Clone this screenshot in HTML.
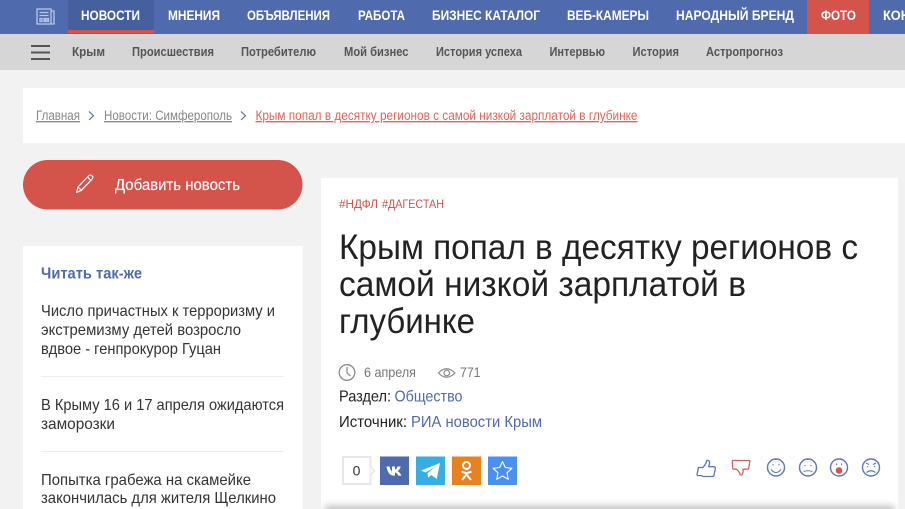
<!DOCTYPE html>
<html lang="ru"><head><meta charset="utf-8"><title>Крым попал в десятку регионов</title>
<style>
html,body{margin:0;padding:0;background:#f2f2f2;overflow:hidden}
svg{display:block;font-family:"Liberation Sans",sans-serif}
.n{font-size:14px;font-weight:700;fill:#fff}
.s{font-size:13px;font-weight:700;fill:#555}
.b{font-size:13.5px;text-decoration:underline}
.t{font-size:35px;fill:#222}
.r{font-size:16px;fill:#333}
.m{font-size:16px;fill:#222}
.l{fill:#4f6aad;font-size:16px}
</style></head><body>
<svg xmlns="http://www.w3.org/2000/svg" width="905" height="509" viewBox="0 0 905 509">
<defs>
<filter id="bl" x="-5%" y="-300%" width="110%" height="700%"><feGaussianBlur stdDeviation="3.5"/></filter>
<clipPath id="cp"><rect x="321" y="178" width="577" height="331"/></clipPath>
</defs>
<rect width="905" height="509" fill="#f2f2f2"/>
<!-- top nav -->
<rect width="905" height="34" fill="#4f6aad"/>
<rect x="68" width="86" height="34" fill="#465f9f"/>
<rect x="68" y="30" width="86" height="3.500" fill="#d4534a"/>
<rect x="807" width="62" height="34" fill="#d4534a"/>
<g fill="none" stroke="#b9c6e6" stroke-width="1.300">
<rect x="37" y="9" width="14" height="15"/>
<path d="M51 11h3v13h-3M39.500 12.500h9M39.500 15.500h9M40 18.500h2v3h-2zM44 18.500h1.500v3H44zM47 18.500h1.500v3H47z"/>
</g>
<text class="n" x="81" y="20" textLength="59" lengthAdjust="spacingAndGlyphs">НОВОСТИ</text>
<text class="n" x="168" y="20" textLength="52" lengthAdjust="spacingAndGlyphs">МНЕНИЯ</text>
<text class="n" x="247" y="20" textLength="83" lengthAdjust="spacingAndGlyphs">ОБЪЯВЛЕНИЯ</text>
<text class="n" x="358" y="20" textLength="47" lengthAdjust="spacingAndGlyphs">РАБОТА</text>
<text class="n" x="432" y="20" textLength="108" lengthAdjust="spacingAndGlyphs">БИЗНЕС КАТАЛОГ</text>
<text class="n" x="567" y="20" textLength="82" lengthAdjust="spacingAndGlyphs">ВЕБ-КАМЕРЫ</text>
<text class="n" x="676" y="20" textLength="118" lengthAdjust="spacingAndGlyphs">НАРОДНЫЙ БРЕНД</text>
<text class="n" x="821" y="20" textLength="35" lengthAdjust="spacingAndGlyphs">ФОТО</text>
<text class="n" x="883" y="20" textLength="27" lengthAdjust="spacingAndGlyphs">КОН</text>
<!-- sub nav -->
<rect y="34" width="905" height="36" fill="#d6d6d6"/>
<path d="M31 46h19M31 52.500h19M31 59h19" stroke="#555" stroke-width="2"/>
<text class="s" x="72" y="56" textLength="33" lengthAdjust="spacingAndGlyphs">Крым</text>
<text class="s" x="132" y="56" textLength="82" lengthAdjust="spacingAndGlyphs">Происшествия</text>
<text class="s" x="241" y="56" textLength="75" lengthAdjust="spacingAndGlyphs">Потребителю</text>
<text class="s" x="344" y="56" textLength="64.500" lengthAdjust="spacingAndGlyphs">Мой бизнес</text>
<text class="s" x="436" y="56" textLength="86" lengthAdjust="spacingAndGlyphs">История успеха</text>
<text class="s" x="549.500" y="56" textLength="55.500" lengthAdjust="spacingAndGlyphs">Интервью</text>
<text class="s" x="632.500" y="56" textLength="46.500" lengthAdjust="spacingAndGlyphs">История</text>
<text class="s" x="706" y="56" textLength="77" lengthAdjust="spacingAndGlyphs">Астропрогноз</text>
<!-- breadcrumb -->
<rect x="23" y="88" width="882" height="55" fill="#fff"/>
<text class="b" x="36" y="120" fill="#888" textLength="44" lengthAdjust="spacingAndGlyphs">Главная</text>
<path d="M89 111.500l4.500 4.200-4.500 4.200" fill="none" stroke="#5f78b5" stroke-width="1.200"/>
<text class="b" x="104" y="120" fill="#888" textLength="128" lengthAdjust="spacingAndGlyphs">Новости: Симферополь</text>
<path d="M241 111.500l4.500 4.200-4.500 4.200" fill="none" stroke="#5f78b5" stroke-width="1.200"/>
<text class="b" x="255.500" y="120" fill="#e0645b" textLength="382" lengthAdjust="spacingAndGlyphs">Крым попал в десятку регионов с самой низкой зарплатой в глубинке</text>
<!-- button -->
<rect x="23" y="160" width="279.500" height="49.500" rx="24.750" fill="#d4534a"/>
<g fill="none" stroke="#fff" stroke-width="1.200" stroke-linejoin="round">
<path d="M76.500 192.500l1.500-5.500 11-11.500q1.500-1 3 .3t.3 3l-11 11.500zM78 187l4 4M87.500 177l4 4"/>
</g>
<text x="115" y="190" font-size="15.500" fill="#fff" stroke="#fff" stroke-width=".15" textLength="125" lengthAdjust="spacingAndGlyphs">Добавить новость</text>
<!-- sidebar -->
<rect x="23" y="246" width="279.500" height="263" fill="#fff"/>
<text x="41" y="278.500" font-size="15.500" font-weight="700" fill="#4f6aad" textLength="101" lengthAdjust="spacingAndGlyphs">Читать так-же</text>
<text class="r" x="41" y="316" textLength="234" lengthAdjust="spacingAndGlyphs">Число причастных к терроризму и</text>
<text class="r" x="41" y="335" textLength="200" lengthAdjust="spacingAndGlyphs">экстремизму детей возросло</text>
<text class="r" x="41" y="354" textLength="180" lengthAdjust="spacingAndGlyphs">вдвое - генпрокурор Гуцан</text>
<rect x="41" y="376" width="243" height="1" fill="#eee"/>
<text class="r" x="41" y="410" textLength="243" lengthAdjust="spacingAndGlyphs">В Крыму 16 и 17 апреля ожидаются</text>
<text class="r" x="41" y="429" textLength="74" lengthAdjust="spacingAndGlyphs">заморозки</text>
<rect x="41" y="451" width="243" height="1" fill="#eee"/>
<text class="r" x="41" y="485" textLength="210" lengthAdjust="spacingAndGlyphs">Попытка грабежа на скамейке</text>
<text class="r" x="41" y="503" textLength="235" lengthAdjust="spacingAndGlyphs">закончилась для жителя Щелкино</text>
<!-- main card -->
<rect x="321" y="178" width="577" height="331" fill="#fff"/>
<text x="339" y="208" font-size="12" fill="#d4534a" textLength="39" lengthAdjust="spacingAndGlyphs">#НДФЛ</text>
<text x="382" y="208" font-size="12" fill="#d4534a" textLength="62" lengthAdjust="spacingAndGlyphs">#ДАГЕСТАН</text>
<text class="t" x="339" y="259" textLength="519" lengthAdjust="spacingAndGlyphs">Крым попал в десятку регионов с</text>
<text class="t" x="339" y="296" textLength="407" lengthAdjust="spacingAndGlyphs">самой низкой зарплатой в</text>
<text class="t" x="339" y="333" textLength="136" lengthAdjust="spacingAndGlyphs">глубинке</text>
<!-- meta -->
<circle cx="347" cy="372.500" r="7.800" fill="none" stroke="#8a8a8a" stroke-width="1.300"/>
<path d="M347 367v6l3.500 3" fill="none" stroke="#8a8a8a" stroke-width="1.200"/>
<text x="364" y="377" font-size="14" fill="#777" textLength="52" lengthAdjust="spacingAndGlyphs">6 апреля</text>
<path d="M438.500 373q8-8.500 16.500 0q-8.500 8.500-16.500 0z" fill="none" stroke="#8a8a8a" stroke-width="1.200"/>
<circle cx="446.800" cy="373" r="2.800" fill="none" stroke="#8a8a8a" stroke-width="1.200"/>
<text x="460" y="377" font-size="14" fill="#777" textLength="20.500" lengthAdjust="spacingAndGlyphs">771</text>
<text class="m" x="339" y="401.500" textLength="52" lengthAdjust="spacingAndGlyphs">Раздел:</text>
<text class="l" x="394.500" y="401.500" textLength="68" lengthAdjust="spacingAndGlyphs">Общество</text>
<text class="m" x="339" y="427" textLength="68" lengthAdjust="spacingAndGlyphs">Источник:</text>
<text class="l" x="411" y="427" textLength="131" lengthAdjust="spacingAndGlyphs">РИА новости Крым</text>
<!-- share -->
<rect x="343" y="457" width="27.500" height="27" fill="#fff" stroke="#e8e8e8" stroke-width="2"/>
<path d="M370.500 467l4 3.800-4 3.800" fill="#fff" stroke="#e8e8e8" stroke-width="1.500"/>
<text x="356.500" y="475.500" font-size="14" fill="#333" text-anchor="middle">0</text>
<rect x="380" y="456.500" width="29" height="28.500" fill="#4f6aad"/>
<path d="M386.500 466.500h3q.8 3.500 2.500 5v-5h3v3.300q1.800-1 2.700-3.300h3q-.7 3-3 4.600 2.500 1.500 3.700 4.500h-3.200q-1-2.500-3.200-3.200v3.200h-1.200q-5.800 0-7.300-9.100z" fill="#fff"/>
<rect x="416" y="456.500" width="29" height="28.500" fill="#37aee2"/>
<path d="M421 470.500l19-7.500-3.200 16-5.600-4-3 2.800-.8-4.500 7.800-6.500-9.800 5.700z" fill="#fff"/>
<rect x="452" y="456.500" width="29" height="28.500" fill="#e8811f"/>
<circle cx="466.500" cy="465.500" r="3.500" fill="none" stroke="#fff" stroke-width="2"/>
<path d="M461.500 471.500q5 3 10 0M466.500 473.500v1.500M466.500 474.500l-4.500 5.500M466.500 474.500l4.500 5.500" fill="none" stroke="#fff" stroke-width="2"/>
<rect x="488" y="456.500" width="29" height="28.500" fill="#4a90f0"/>
<path d="M502.500 461.500l2.800 6 6.600.8-4.900 4.500 1.300 6.500-5.800-3.300-5.800 3.300 1.300-6.500-4.900-4.500 6.600-.8z" fill="none" stroke="#fff" stroke-width="1.100" stroke-linejoin="round"/>
<!-- reactions -->
<path d="M698.500 467.500h4.200q3-2.500 4.200-7.200 2-.4 2.700 1.600.2 2.300-1 4.800h5.600q1.400.3 1.100 2l-1.300 6.400q-.3 1.400-1.600 1.400h-9.500l-1.400-.9h-3.500q-1-.1-1-1z" fill="none" stroke="#5b78bb" stroke-width="1.300" stroke-linejoin="round"/>
<path d="M733 460.500h16q1 0 .8 1.200l-1.100 6.500q-.3 1-1.500 1h-4.200q.6 3-1 5.500l-1.700.2q-1.100-3.700-4-5.700h-2.600q-.8 0-1-1l-.4-6.500q0-1.200.7-1.200z" fill="none" stroke="#dc6058" stroke-width="1.300" stroke-linejoin="round"/>
<g fill="none" stroke="#5b78bb" stroke-width="1.400">
<circle cx="776" cy="467.500" r="8.500"/>
<circle cx="808" cy="467.500" r="8.500"/>
<circle cx="839" cy="467.500" r="8.500"/>
<circle cx="871" cy="467.500" r="8.500"/>
<path d="M771 469.500q5 6 10 0M773 464v1.500M779 464v1.500" stroke-width="1.100"/>
<path d="M803.500 471.500q4.500-1.500 9 0M805 465v1.300M811 465v1.300" stroke-width="1.100"/>
<path d="M836.500 463.500v1.500M841.500 463.500v1.500" stroke-width="1.100"/>
<path d="M866 463l3 1.500M876 463l-3 1.500M866.500 472.500q4.500-3.500 9 0M867.500 466v1M874.500 466v1" stroke-width="1.100"/>
</g>
<circle cx="839" cy="470.500" r="3.300" fill="#d4534a"/>
<!-- bottom shadow band -->
<g clip-path="url(#cp)"><rect x="325" y="505.500" width="569" height="9" fill="#c2c2c2" filter="url(#bl)"/></g>
</svg>
</body></html>
